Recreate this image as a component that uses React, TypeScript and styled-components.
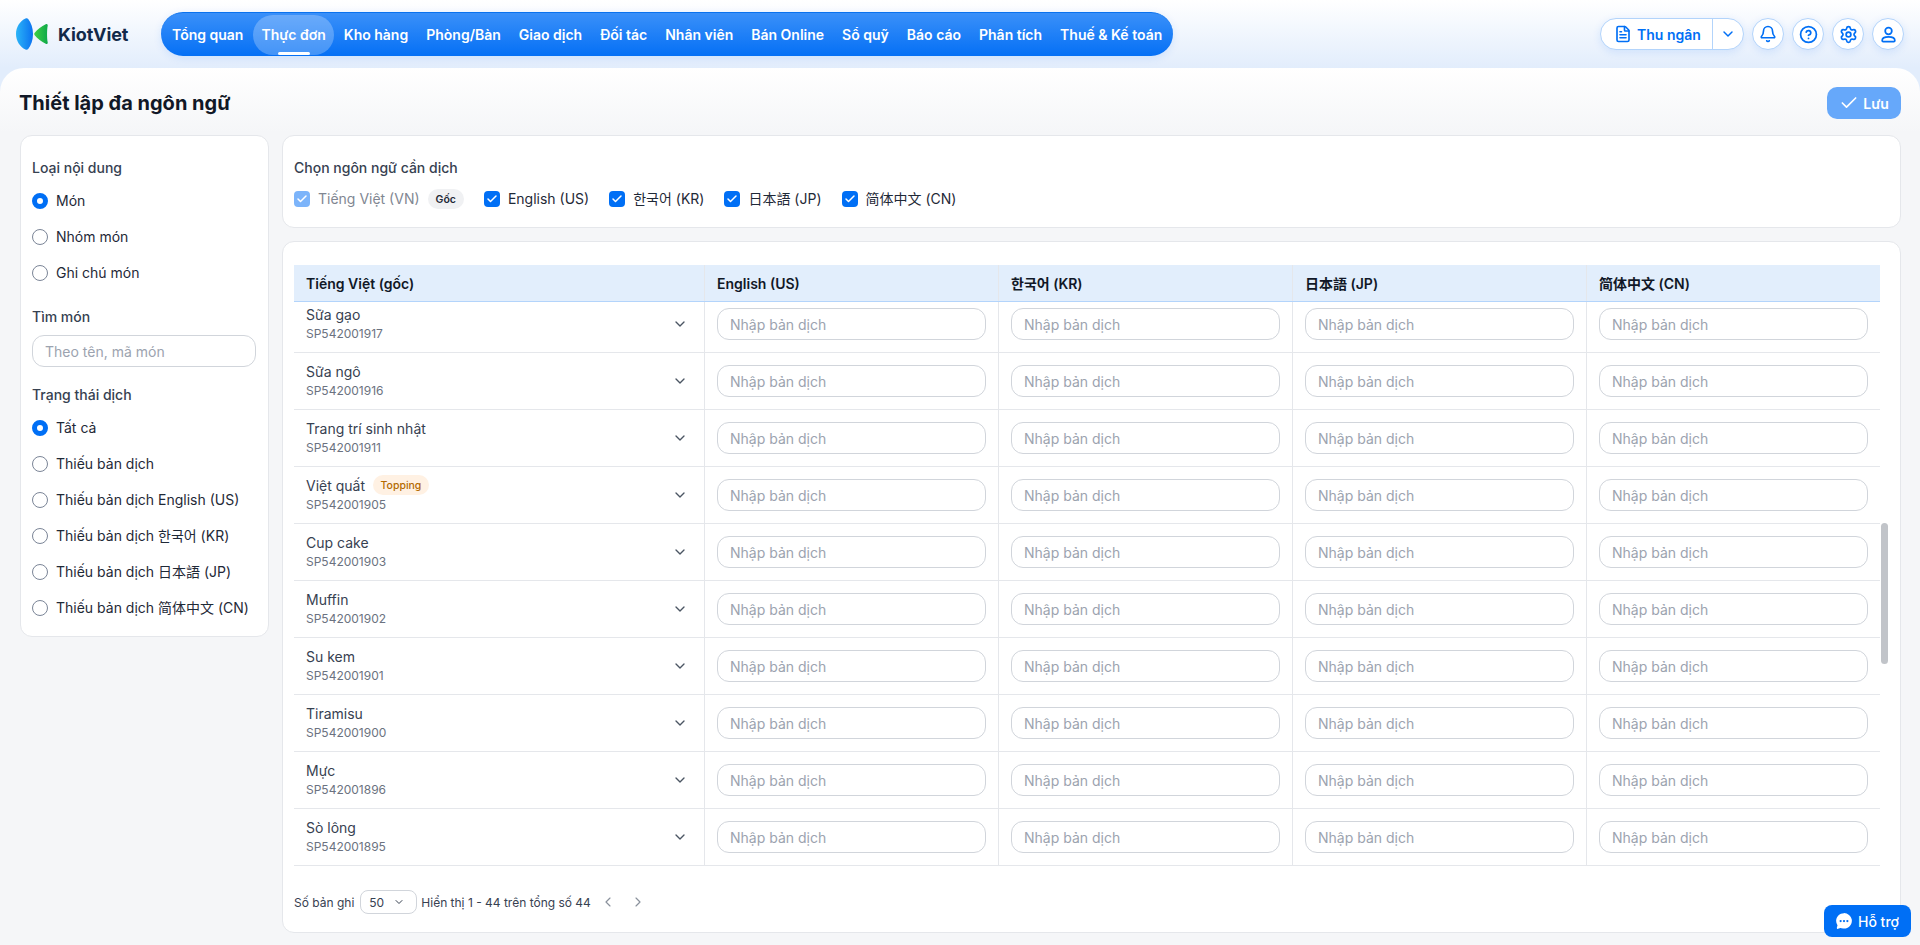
import React from 'react'
import styled, { createGlobalStyle } from 'styled-components'
import {
  Bell,
  Check,
  ChevronDown,
  ChevronLeft,
  ChevronRight,
  CircleHelp,
  FileText,
  Settings,
} from 'lucide-react'
import { IoChatbubbleEllipses } from 'react-icons/io5'

const FONT = `Inter, "Noto Sans CJK SC", "Noto Sans CJK KR", "Noto Sans CJK JP", sans-serif`
const BLUE = '#006ff5'

const GlobalStyle = createGlobalStyle`
  html, body {
    margin: 0;
    padding: 0;
    height: 100%;
    overflow: hidden;
  }
  body {
    font-family: ${FONT};
    font-size: 14px;
    color: #1f2937;
  }
  * {
    box-sizing: border-box;
  }
`

const Page = styled.div`
  display: flex;
  flex-direction: column;
  height: 945px;
  background: linear-gradient(180deg, #ffffff 0, #e2edfc 68px, #e2edfc 100%);
`

const Header = styled.header`
  display: flex;
  align-items: center;
  flex: 0 0 68px;
  padding: 0 16px;
`

const LogoBox = styled.div`
  display: flex;
  align-items: center;
  gap: 9px;
  width: 145px;
`

const LogoText = styled.span`
  font-size: 18px;
  font-weight: 700;
  color: #12294a;
  letter-spacing: -0.1px;
`

const Nav = styled.nav`
  display: flex;
  align-items: center;
  gap: 2px;
  height: 44px;
  padding: 0 3px;
  border-radius: 22px;
  border-top: 1px solid #0a72ee;
  background: linear-gradient(180deg, #3a90f9 0%, #0570f5 100%);
  box-shadow: 0 2px 8px rgba(0, 111, 245, 0.12);
`

const NavItem = styled.a<{ $active?: boolean }>`
  position: relative;
  display: flex;
  align-items: center;
  height: 40px;
  padding: 0 8px;
  border-radius: 20px;
  font-size: 14px;
  font-weight: 600;
  color: #fff;
  white-space: nowrap;
  background: ${({ $active }) => ($active ? 'rgba(255, 255, 255, 0.25)' : 'transparent')};

  &::after {
    content: '';
    display: ${({ $active }) => ($active ? 'block' : 'none')};
    position: absolute;
    left: 50%;
    bottom: 0;
    width: 32px;
    height: 3px;
    margin-left: -16px;
    border-radius: 2px;
    background: #fff;
  }
`

const HeaderRight = styled.div`
  display: flex;
  align-items: center;
  gap: 8px;
  margin-left: auto;
`

const CashierGroup = styled.div`
  display: flex;
  align-items: center;
  height: 32px;
  border: 1px solid #b3d4fb;
  border-radius: 16px;
  background: #fff;
  color: ${BLUE};
  box-shadow: 0 2px 8px rgba(0, 111, 245, 0.12);
`

const CashierMain = styled.div`
  display: flex;
  align-items: center;
  gap: 5px;
  height: 100%;
  width: 112px;
  padding-left: 13px;
  border-right: 1px solid #b3d4fb;
  font-size: 14px;
  font-weight: 600;
`

const CashierCaret = styled.div`
  display: flex;
  align-items: center;
  justify-content: center;
  width: 30px;
`

const RoundButton = styled.div`
  display: flex;
  align-items: center;
  justify-content: center;
  width: 32px;
  height: 32px;
  border: 1px solid #b3d4fb;
  border-radius: 50%;
  background: #fff;
  color: ${BLUE};
  box-shadow: 0 2px 8px rgba(0, 111, 245, 0.12);
`

const Panel = styled.main`
  flex: 1;
  display: flex;
  flex-direction: column;
  min-height: 0;
  padding: 19px 19px 12px 20px;
  border-radius: 24px 24px 0 0;
  background: linear-gradient(180deg, #ffffff 0, #f5f6f8 64px, #f5f6f8 100%);
`

const TitleBar = styled.div`
  display: flex;
  align-items: center;
  justify-content: space-between;
  height: 32px;
  margin-bottom: 16px;
`

const Title = styled.h1`
  margin: 0 0 0 -1px;
  font-size: 20px;
  font-weight: 700;
  color: #111827;
`

const SaveButton = styled.button`
  display: flex;
  align-items: center;
  justify-content: center;
  gap: 4px;
  width: 74px;
  height: 32px;
  padding: 0;
  border: 0;
  border-radius: 10px;
  background: #66a8fa;
  color: #fff;
  font-family: ${FONT};
  font-size: 14px;
  font-weight: 600;
`

const Body = styled.div`
  flex: 1;
  display: flex;
  gap: 13px;
  min-height: 0;
`

const Card = styled.section`
  border: 1px solid #e5e7eb;
  border-radius: 12px;
  background: #fff;
`

const Sidebar = styled(Card)`
  flex: 0 0 249px;
  align-self: flex-start;
  padding: 22px 12px 18px 11px;
`

const GroupTitle = styled.div<{ $top?: number }>`
  margin-top: ${({ $top }) => $top ?? 0}px;
  font-size: 14px;
  line-height: 20px;
  font-weight: 500;
  color: #374151;
`

const RadioList = styled.div`
  display: flex;
  flex-direction: column;
  gap: 16px;
  margin-top: 13px;
`

const RadioRow = styled.label`
  display: flex;
  align-items: center;
  gap: 8px;
  font-size: 14px;
  line-height: 20px;
  color: #1f2937;
  white-space: nowrap;
`

const RadioDot = styled.span<{ $on?: boolean }>`
  flex: 0 0 16px;
  width: 16px;
  height: 16px;
  border-radius: 50%;
  background: #fff;
  border: ${({ $on }) => ($on ? `5px solid ${BLUE}` : '1px solid #7b8597')};
`

const TextInput = styled.input`
  display: block;
  width: 100%;
  height: 32px;
  padding: 0 12px;
  border: 1px solid #d1d5db;
  border-radius: 12px;
  background: #fff;
  font-family: ${FONT};
  font-size: 14px;
  outline: none;

  &::placeholder {
    color: #9ca3af;
    opacity: 1;
  }
`

const SearchInput = styled(TextInput)`
  margin-top: 8px;
`

const Content = styled.div`
  flex: 1;
  display: flex;
  flex-direction: column;
  gap: 13px;
  min-width: 0;
`

const LanguageCard = styled(Card)`
  flex: 0 0 93px;
  padding: 22px 11px 0;
`

const LanguageRow = styled.div`
  display: flex;
  align-items: center;
  gap: 20px;
  margin-top: 11px;
`

const LanguageItem = styled.label<{ $muted?: boolean }>`
  display: flex;
  align-items: center;
  gap: 8px;
  line-height: 20px;
  color: ${({ $muted }) => ($muted ? '#6b7280' : '#1f2937')};
  opacity: ${({ $muted }) => ($muted ? 0.85 : 1)};
`

const CheckBox = styled.span<{ $muted?: boolean }>`
  display: flex;
  align-items: center;
  justify-content: center;
  width: 16px;
  height: 16px;
  border-radius: 4px;
  background: ${({ $muted }) => ($muted ? '#66a8fa' : BLUE)};
  color: #fff;
`

const OriginTag = styled.span`
  display: flex;
  align-items: center;
  height: 20px;
  padding: 0 8px;
  margin-left: -12px;
  border-radius: 10px;
  background: #f0f1f3;
  font-size: 10.5px;
  font-weight: 600;
  color: #1f2937;
`

const TableCard = styled(Card)`
  position: relative;
  flex: 1;
  display: flex;
  flex-direction: column;
  min-height: 0;
  padding: 23px 20px 0 11px;
`

const GridRow = styled.div`
  display: grid;
  grid-template-columns: 410px repeat(4, 1fr);
`

const HeadRow = styled(GridRow)`
  flex: 0 0 37px;
  background: #e2eefc;
  border-bottom: 1px solid #b3d4fb;
`

const HeadCell = styled.div`
  display: flex;
  align-items: center;
  padding: 0 12px;
  font-size: 14px;
  font-weight: 600;
  color: #111827;

  & + & {
    border-left: 1px solid #e5e7eb;
  }
`

const RowsViewport = styled.div`
  flex: 0 0 565px;
  overflow: hidden;
`

const RowsInner = styled.div`
  margin-top: -6px;
`

const BodyRow = styled(GridRow)`
  height: 57px;
  border-bottom: 1px solid #e5e7eb;
`

const NameCell = styled.div`
  display: flex;
  align-items: center;
  justify-content: space-between;
  padding: 0 16px 0 12px;
  color: #4b5563;
`

const NameBlock = styled.div`
  padding-bottom: 2px;
`

const NameLine = styled.div`
  display: flex;
  align-items: center;
  gap: 8px;
  height: 20px;
  font-size: 14px;
  color: #374151;
`

const ItemCode = styled.div`
  margin-top: 2px;
  font-size: 12px;
  line-height: 16px;
  color: #6b7280;
`

const ToppingTag = styled.span`
  display: flex;
  align-items: center;
  height: 20px;
  padding: 0 7.5px;
  border-radius: 10px;
  background: #fff1e3;
  font-size: 10.5px;
  font-weight: 500;
  color: #b36a00;
`

const InputCell = styled.div`
  display: flex;
  align-items: center;
  padding: 0 12px;
  border-left: 1px solid #e5e7eb;
`

const ScrollThumb = styled.div`
  position: absolute;
  top: 281px;
  right: 12px;
  width: 7px;
  height: 141px;
  border-radius: 4px;
  background: #c1c4c9;
`

const Pager = styled.div`
  display: flex;
  align-items: center;
  margin-top: 23px;
  height: 24px;
  font-size: 12px;
  color: #374151;
`

const PageSize = styled.div`
  display: flex;
  align-items: center;
  justify-content: space-between;
  width: 57px;
  height: 24px;
  margin: 0 4px 0 6px;
  padding: 0 11px 0 8px;
  border: 1px solid #d1d5db;
  border-radius: 8px;
  color: #374151;
`

const PagerArrow = styled.span<{ $gap: number }>`
  display: flex;
  margin-left: ${({ $gap }) => $gap}px;
  color: #8a919c;
`

const HelpButton = styled.button`
  position: fixed;
  right: 9px;
  bottom: 8px;
  display: flex;
  align-items: center;
  gap: 5px;
  width: 87px;
  height: 32px;
  padding: 0 0 0 11px;
  border: 0;
  border-radius: 8px;
  background: ${BLUE};
  color: #fff;
  font-family: ${FONT};
  font-size: 14px;
  font-weight: 500;
`

const navItems = [
  'Tổng quan',
  'Thực đơn',
  'Kho hàng',
  'Phòng/Bàn',
  'Giao dịch',
  'Đối tác',
  'Nhân viên',
  'Bán Online',
  'Sổ quỹ',
  'Báo cáo',
  'Phân tích',
  'Thuế & Kế toán',
]

const languages = ['English (US)', '한국어 (KR)', '日本語 (JP)', '简体中文 (CN)']

const contentTypes = ['Món', 'Nhóm món', 'Ghi chú món']

const statuses = [
  'Tất cả',
  'Thiếu bản dịch',
  'Thiếu bản dịch English (US)',
  'Thiếu bản dịch 한국어 (KR)',
  'Thiếu bản dịch 日本語 (JP)',
  'Thiếu bản dịch 简体中文 (CN)',
]

const items = [
  { name: 'Sữa gạo', code: 'SP542001917' },
  { name: 'Sữa ngô', code: 'SP542001916' },
  { name: 'Trang trí sinh nhật', code: 'SP542001911' },
  { name: 'Việt quất', code: 'SP542001905', topping: true },
  { name: 'Cup cake', code: 'SP542001903' },
  { name: 'Muffin', code: 'SP542001902' },
  { name: 'Su kem', code: 'SP542001901' },
  { name: 'Tiramisu', code: 'SP542001900' },
  { name: 'Mực', code: 'SP542001896' },
  { name: 'Sò lông', code: 'SP542001895' },
]

const Logo = () => (
  <svg width="33" height="32" viewBox="0 0 33 32">
    <defs>
      <linearGradient id="lens" x1="0" y1="0" x2="1" y2="0">
        <stop offset="0" stopColor="#2bb4f7" />
        <stop offset="1" stopColor="#0b72f0" />
      </linearGradient>
      <linearGradient id="arrow" x1="0" y1="0" x2="1" y2="0">
        <stop offset="0" stopColor="#3fd044" />
        <stop offset="1" stopColor="#0ea84a" />
      </linearGradient>
    </defs>
    <path
      d="M9.5 .5C4 3 0 9 0 16s4 13 9.5 15.5c1 .5 2 .3 2.7-.5C15 27.5 17 22 17 16S15 4.5 12.2 1C11.5 .2 10.5 0 9.5 .5Z"
      fill="url(#lens)"
    />
    <path
      d="M31.7 7.8C30.9 11 30.9 21 31.7 24.2c.3 1.4-.8 2.2-2 1.5C25.5 23.5 21.5 20.5 18.7 17.2c-.6-.7-.6-1.7 0-2.4C21.5 11.5 25.5 8.5 29.7 6.3c1.2-.7 2.3.1 2 1.5Z"
      fill="url(#arrow)"
    />
  </svg>
)

const UserIcon = () => (
  <svg
    width="19"
    height="19"
    viewBox="0 0 24 24"
    fill="none"
    stroke="currentColor"
    strokeWidth="2.2"
    strokeLinejoin="round"
  >
    <circle cx="12" cy="7.5" r="4.2" />
    <path d="M4 19.5c0-3 3-4.5 8-4.5s8 1.5 8 4.5c0 .8-.5 1.500-1.300 1.500H5.300C4.500 21 4 20.300 4 19.500Z" />
  </svg>
)

const App: React.FC = () => {
  return (
    <Page>
      <GlobalStyle />
      <Header>
        <LogoBox>
          <Logo />
          <LogoText>KiotViet</LogoText>
        </LogoBox>
        <Nav>
          {navItems.map((label) => (
            <NavItem key={label} $active={label === 'Thực đơn'}>
              {label}
            </NavItem>
          ))}
        </Nav>
        <HeaderRight>
          <CashierGroup>
            <CashierMain>
              <FileText size={18} strokeWidth={2.2} />
              Thu ngân
            </CashierMain>
            <CashierCaret>
              <ChevronDown size={16} strokeWidth={2.2} />
            </CashierCaret>
          </CashierGroup>
          <RoundButton>
            <Bell size={18} strokeWidth={2.2} />
          </RoundButton>
          <RoundButton>
            <CircleHelp size={19} strokeWidth={2.2} />
          </RoundButton>
          <RoundButton>
            <Settings size={19} strokeWidth={2.2} />
          </RoundButton>
          <RoundButton>
            <UserIcon />
          </RoundButton>
        </HeaderRight>
      </Header>

      <Panel>
        <TitleBar>
          <Title>Thiết lập đa ngôn ngữ</Title>
          <SaveButton>
            <Check size={20} strokeWidth={2} />
            Lưu
          </SaveButton>
        </TitleBar>

        <Body>
          <Sidebar as="aside">
            <GroupTitle>Loại nội dung</GroupTitle>
            <RadioList>
              {contentTypes.map((label, i) => (
                <RadioRow key={label}>
                  <RadioDot $on={i === 0} />
                  {label}
                </RadioRow>
              ))}
            </RadioList>
            <GroupTitle $top={24}>Tìm món</GroupTitle>
            <SearchInput placeholder="Theo tên, mã món" />
            <GroupTitle $top={18}>Trạng thái dịch</GroupTitle>
            <RadioList>
              {statuses.map((label, i) => (
                <RadioRow key={label}>
                  <RadioDot $on={i === 0} />
                  {label}
                </RadioRow>
              ))}
            </RadioList>
          </Sidebar>

          <Content>
            <LanguageCard>
              <GroupTitle>Chọn ngôn ngữ cần dịch</GroupTitle>
              <LanguageRow>
                <LanguageItem $muted>
                  <CheckBox $muted>
                    <Check size={12} strokeWidth={3} />
                  </CheckBox>
                  Tiếng Việt (VN)
                </LanguageItem>
                <OriginTag>Gốc</OriginTag>
                {languages.map((label) => (
                  <LanguageItem key={label}>
                    <CheckBox>
                      <Check size={12} strokeWidth={3} />
                    </CheckBox>
                    {label}
                  </LanguageItem>
                ))}
              </LanguageRow>
            </LanguageCard>

            <TableCard>
              <HeadRow>
                <HeadCell>Tiếng Việt (gốc)</HeadCell>
                {languages.map((label) => (
                  <HeadCell key={label}>{label}</HeadCell>
                ))}
              </HeadRow>
              <RowsViewport>
                <RowsInner>
                  {items.map((item) => (
                    <BodyRow key={item.code}>
                      <NameCell>
                        <NameBlock>
                          <NameLine>
                            {item.name}
                            {item.topping && <ToppingTag>Topping</ToppingTag>}
                          </NameLine>
                          <ItemCode>{item.code}</ItemCode>
                        </NameBlock>
                        <ChevronDown size={16} strokeWidth={2} />
                      </NameCell>
                      {languages.map((label) => (
                        <InputCell key={label}>
                          <TextInput placeholder="Nhập bản dịch" />
                        </InputCell>
                      ))}
                    </BodyRow>
                  ))}
                </RowsInner>
              </RowsViewport>
              <ScrollThumb />
              <Pager>
                Số bản ghi
                <PageSize>
                  50
                  <ChevronDown size={12} strokeWidth={2} />
                </PageSize>
                Hiển thị 1 - 44 trên tổng số 44
                <PagerArrow $gap={9}>
                  <ChevronLeft size={16} strokeWidth={1.75} />
                </PagerArrow>
                <PagerArrow $gap={14}>
                  <ChevronRight size={16} strokeWidth={1.75} />
                </PagerArrow>
              </Pager>
            </TableCard>
          </Content>
        </Body>
      </Panel>

      <HelpButton>
        <IoChatbubbleEllipses size={18} />
        Hỗ trợ
      </HelpButton>
    </Page>
  )
}

export default App
